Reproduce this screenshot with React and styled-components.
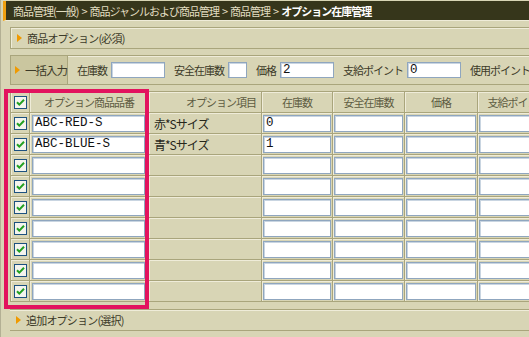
import styled, { createGlobalStyle } from 'styled-components';

const GlobalStyle = createGlobalStyle`
  html, body { margin: 0; padding: 0; background: #d8d5b5; }
  body { font-family: "Noto Sans CJK JP", "Noto Sans", sans-serif; }
  * { box-sizing: border-box; }
`;

const LINE = '#a9a57c';
const LIGHT = '#efecd9';

const Page = styled.div`
  position: relative;
  width: 529px;
  height: 337px;
  overflow: hidden;
  background: #d8d5b5;
  border-left: 1px solid #b3b094;
  padding-left: 2px;
`;

const TitleBar = styled.div`
  height: 20px;
  margin-top: 1px;
  background: #36361b;
  border-left: 3px solid #f0a010;
  padding-left: 7px;
  font-size: 11px;
  letter-spacing: -1px;
  line-height: 20px;
  color: #e2dec2;
  white-space: nowrap;
  border-bottom: 1px solid ${LIGHT};
`;

const Sep = styled.span`
  margin: 0 3px;
`;

const Current = styled.b`
  color: #ffffff;
`;

const Content = styled.div`
  padding-left: 7px;
`;

const Triangle = styled.span`
  width: 0;
  height: 0;
  border-top: 4px solid transparent;
  border-bottom: 4px solid transparent;
  border-left: 5px solid #f09a00;
  margin-right: 5px;
`;

const SectionBox = styled.div`
  margin-top: 6px;
  height: 22px;
  border: 1px solid ${LINE};
  border-right: none;
  box-shadow: inset 1px 1px 0 ${LIGHT};
  display: flex;
  align-items: center;
  padding-left: 6px;
  font-size: 11px;
  letter-spacing: -0.8px;
  color: #3c3a28;
`;

const BulkRow = styled.div`
  margin-top: 6px;
  height: 30px;
  border-top: 1px solid ${LINE};
  border-bottom: 1px solid ${LINE};
  box-shadow: inset 0 1px 0 ${LIGHT};
  display: flex;
  align-items: center;
  font-size: 11px;
  letter-spacing: -1px;
  color: #3c3a28;
  white-space: nowrap;
`;

const BulkHead = styled.div`
  width: 58px;
  align-self: stretch;
  background: #cac69f;
  border-right: 1px solid ${LINE};
  border-left: 1px solid ${LINE};
  display: flex;
  align-items: center;
  padding-left: 4px;
  font-size: 11.5px;
`;

const Field = styled.label`
  display: flex;
  align-items: center;
  margin-left: 9px;
  gap: 4px;
`;

const TextBox = styled.input`
  width: ${p => p.$w || '100%'};
  height: ${p => p.$h || 17}px;
  border: 1px solid #8fa6bf;
  box-shadow: inset 1px 1px 0 #c9d5e1;
  background: #fff;
  padding: 0 2px;
  margin: 0;
  font-family: "Liberation Mono", "DejaVu Sans Mono", monospace;
  font-size: 12.5px;
  color: #111;
  outline: none;
  flex: none;
`;

const Table = styled.div`
  margin-top: 6px;
  border-top: 1px solid ${LINE};
  border-left: 1px solid ${LINE};
`;

const Row = styled.div`
  display: grid;
  grid-template-columns: 19px 119px 113px 71px 72px 73px 80px;
  height: 21px;
  border-bottom: 1px solid ${LINE};
  box-shadow: inset 0 1px 0 ${LIGHT};
`;

const Cell = styled.div`
  border-right: 1px solid ${LINE};
  box-shadow: inset 1px 0 0 ${LIGHT};
  display: flex;
  align-items: center;
  justify-content: ${p => p.$align || 'flex-start'};
  padding: ${p => p.$pad || '0 2px'};
  font-size: ${p => p.$size || 11}px;
  letter-spacing: -1px;
  color: ${p => (p.$head ? '#5e5c42' : '#26261a')};
  white-space: nowrap;
  overflow: hidden;
`;

const Footer = styled.div`
  margin-top: 7px;
  height: 22px;
  border-top: 1px solid ${LINE};
  border-bottom: 1px solid ${LINE};
  box-shadow: inset 0 1px 0 ${LIGHT};
  display: flex;
  align-items: center;
  padding-left: 6px;
  font-size: 11px;
  letter-spacing: -0.8px;
  color: #3c3a28;
`;

const Highlight = styled.div`
  position: absolute;
  left: 3px;
  top: 89px;
  width: 145px;
  height: 220px;
  border: 4px solid #e2135e;
  pointer-events: none;
`;

const Check = () => (
  <svg width="13" height="13" viewBox="0 0 13 13">
    <rect x="0.5" y="0.5" width="12" height="12" fill="#f4f4ee" stroke="#1c5180" />
    <path d="M3 6.2 L5.3 8.6 L10 3.8" fill="none" stroke="#21a121" strokeWidth="2" />
  </svg>
);

const rows = [
  { code: 'ABC-RED-S', item: '赤*Sサイズ', stock: '0' },
  { code: 'ABC-BLUE-S', item: '青*Sサイズ', stock: '1' },
  {}, {}, {}, {}, {}, {}, {},
];

const bulkFields = [
  { label: '在庫数', w: 54 },
  { label: '安全在庫数', w: 19 },
  { label: '価格', w: 54, value: '2' },
  { label: '支給ポイント', w: 54, value: '0' },
  { label: '使用ポイント', w: 54, value: '0' },
];

const crumbs = ['商品管理(一般)', '商品ジャンルおよび商品管理', '商品管理'];

export default function App() {
  return (
    <Page>
      <GlobalStyle />
      <TitleBar>
        {crumbs.map(c => (
          <span key={c}>{c}<Sep>&gt;</Sep></span>
        ))}
        <Current>オプション在庫管理</Current>
      </TitleBar>
      <Content>
        <SectionBox>
          <Triangle />
          商品オプション(必須)
        </SectionBox>
        <BulkRow>
          <BulkHead>
            <Triangle />
            一括入力
          </BulkHead>
          {bulkFields.map(f => (
            <Field key={f.label}>
              {f.label}
              <TextBox $w={`${f.w}px`} $h={16} defaultValue={f.value || ''} />
            </Field>
          ))}
        </BulkRow>
        <Table>
          <Row>
            <Cell $align="center" $pad="0"><Check /></Cell>
            <Cell $head $align="center">オプション商品品番</Cell>
            <Cell $head $align="flex-end" $pad="0 5px">オプション項目</Cell>
            <Cell $head $align="center">在庫数</Cell>
            <Cell $head $align="center">安全在庫数</Cell>
            <Cell $head $align="center">価格</Cell>
            <Cell $head $align="center">支給ポイント</Cell>
          </Row>
          {rows.map((r, i) => (
            <Row key={i}>
              <Cell $align="center" $pad="0"><Check /></Cell>
              <Cell $pad="0 3px 0 2px"><TextBox defaultValue={r.code || ''} /></Cell>
              <Cell $pad="0 5px" $size={12}>{r.item || ''}</Cell>
              <Cell $pad="0 1px"><TextBox defaultValue={r.stock || ''} /></Cell>
              <Cell $pad="0 1px"><TextBox /></Cell>
              <Cell $pad="0 1px"><TextBox /></Cell>
              <Cell $pad="0 1px"><TextBox /></Cell>
            </Row>
          ))}
        </Table>
        <Footer>
          <Triangle />
          追加オプション(選択)
        </Footer>
      </Content>
      <Highlight />
    </Page>
  );
}
